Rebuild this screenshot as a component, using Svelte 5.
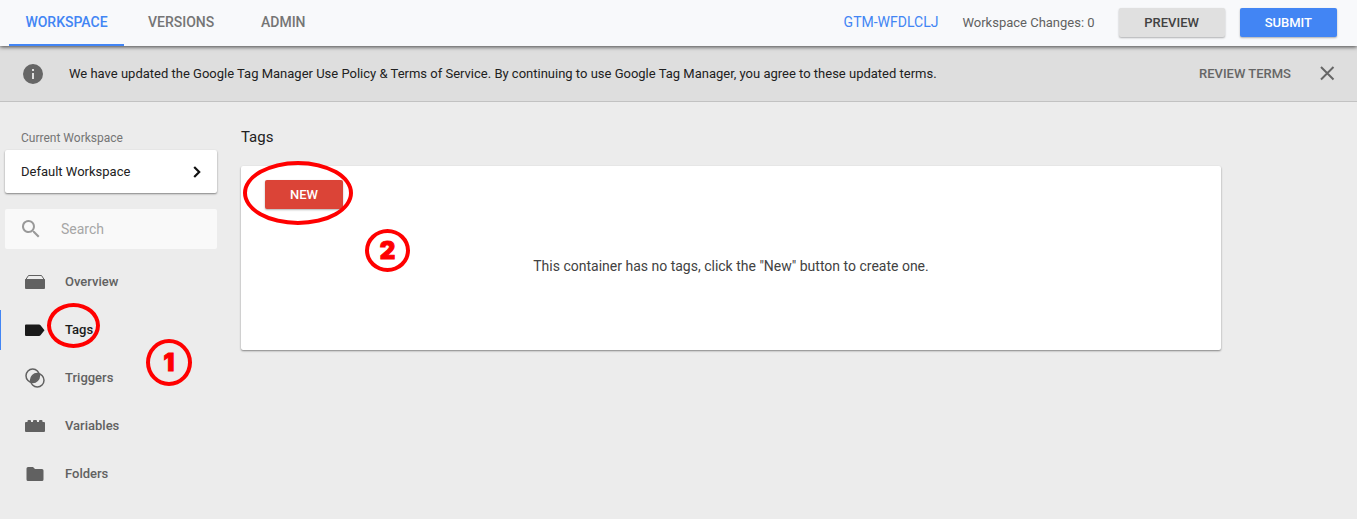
<script>
  let active = "Tags";
  let search = "";

  const tabs = ["Workspace", "Versions", "Admin"];
  const items = ["Overview", "Tags", "Triggers", "Variables", "Folders"];
</script>

<div class="page">
  <header class="topbar">
    <nav class="tabs">
      {#each tabs as tab, i}
        <a href="#{tab.toLowerCase()}" class="tab" class:selected={i === 0}>{tab}</a>
      {/each}
    </nav>
    <div class="actions">
      <a href="#container" class="container-id">GTM-WFDLCLJ</a>
      <span class="changes">Workspace Changes: 0</span>
      <button class="btn preview">PREVIEW</button>
      <button class="btn submit">SUBMIT</button>
    </div>
  </header>

  <div class="notice">
    <svg class="info" width="24" height="24" viewBox="0 0 24 24">
      <path
        fill="#666"
        d="M12 2a10 10 0 1 0 0 20 10 10 0 0 0 0-20zm1 15h-2v-6h2v6zm0-8h-2V7h2v2z"
      />
    </svg>
    <p>
      We have updated the Google Tag Manager Use Policy &amp; Terms of Service. By
      continuing to use Google Tag Manager, you agree to these updated terms.
    </p>
    <button class="review">REVIEW TERMS</button>
    <button class="close" aria-label="Close">
      <svg width="16" height="16" viewBox="0 0 16 16">
        <path d="M2 1l12.500 12.500M14.500 1L2 13.500" stroke="#666" stroke-width="2" />
      </svg>
    </button>
  </div>

  <div class="body">
    <aside class="sidebar">
      <div class="caption">Current Workspace</div>
      <button class="workspace">
        Default Workspace
        <svg width="8" height="12" viewBox="0 0 8 12">
          <path d="M1.200 1l5 5-5 5" fill="none" stroke="#111" stroke-width="2.200" />
        </svg>
      </button>
      <label class="search">
        <svg width="24" height="24" viewBox="0 0 24 24">
          <path
            fill="#999"
            d="M15.5 14h-.8l-.3-.3A6.5 6.5 0 1 0 13.700 14.400l.3.300v.8l5 5 1.500-1.500-5-5zm-6 0a4.500 4.500 0 1 1 0-9 4.500 4.500 0 0 1 0 9z"
          />
        </svg>
        <input type="text" placeholder="Search" aria-label="Search" bind:value={search} />
      </label>

      <nav class="menu">
        {#each items as item}
          <a
            href="#{item.toLowerCase()}"
            class="item"
            class:current={active === item}
            on:click|preventDefault={() => (active = item)}
          >
            <svg width="20" height="20" viewBox="0 0 20 20" fill="currentColor">
              {#if item === "Overview"}
                <path d="M0.500 8L3.500 3.500h13L19.500 8" fill="none" stroke="currentColor" />
                <rect y="7" width="20" height="10" rx="1" />
              {:else if item === "Tags"}
                <path
                  d="M1 4.500H14a2 2 0 0 1 1.500.7l4 5-4 5a2 2 0 0 1-1.500.7H1A1 1 0 0 1 0 15V5.500a1 1 0 0 1 1-1z"
                />
              {:else if item === "Triggers"}
                <circle cx="7.700" cy="7.700" r="6.700" fill="none" stroke="currentColor" stroke-width="1.500" />
                <circle cx="12.300" cy="12.300" r="6.700" fill="none" stroke="currentColor" stroke-width="1.500" />
                <path d="M14.100 5.900A6.700 6.700 0 0 1 5.900 14.100 6.700 6.700 0 0 1 14.100 5.900z" />
              {:else if item === "Variables"}
                <path
                  d="M1 6h1.500V5q0-1 1-1h1.500q1 0 1 1v1h2V5q0-1 1-1h2q1 0 1 1v1h2V5q0-1 1-1h1.500q1 0 1 1v1H19q1 0 1 1v8q0 1-1 1H1q-1 0-1-1V7q0-1 1-1z"
                />
              {:else}
                <path
                  d="M3 3h5l2 2h7a1.500 1.500 0 0 1 1.500 1.500v9A1.500 1.500 0 0 1 17 17H3a1.500 1.500 0 0 1-1.500-1.500v-11A1.500 1.500 0 0 1 3 3z"
                />
              {/if}
            </svg>
            <span class="label">{item}</span>
            {#if item === "Tags"}
              <span class="ring ring-tags"></span>
              <span class="ring step step-one">1</span>
            {/if}
          </a>
        {/each}
      </nav>
    </aside>

    <main>
      <h1>Tags</h1>
      <section class="card">
        <button class="btn new">NEW</button>
        <p>This container has no tags, click the "New" button to create one.</p>
        <span class="ring ring-new"></span>
        <span class="ring step step-two">2</span>
      </section>
    </main>
  </div>
</div>

<style>
  :global(body) {
    margin: 0;
    background: #ececec;
  }

  .page {
    min-height: 100vh;
    font-family: Roboto, sans-serif;
    font-size: 13px;
    color: #212121;
    background: #ececec;
  }

  .page * {
    box-sizing: border-box;
  }

  a {
    text-decoration: none;
  }

  button {
    font: inherit;
    border: 0;
    padding: 0;
    cursor: pointer;
  }

  .topbar {
    position: relative;
    display: flex;
    justify-content: space-between;
    height: 46px;
    padding: 0 20px 0 9px;
    background: #f8f9fb;
    box-shadow: 0 1px 4px rgba(0, 0, 0, 0.7);
  }

  .tabs {
    display: flex;
    gap: 8px;
  }

  .tab {
    min-width: 90px;
    padding: 0 16px;
    border-bottom: 2px solid transparent;
    font-size: 14px;
    font-weight: 500;
    line-height: 44px;
    text-align: center;
    text-transform: uppercase;
    color: #757575;
  }

  .tab.selected {
    min-width: 115px;
    color: #4285f4;
    border-color: #4285f4;
  }

  .actions {
    display: flex;
    align-items: center;
    padding-bottom: 2px;
  }

  .container-id {
    margin-right: 24px;
    font-size: 14px;
    color: #4285f4;
  }

  .changes {
    margin-right: 24px;
    color: #616161;
  }

  .btn {
    height: 29px;
    padding: 0 25px;
    border-radius: 2px;
    font-weight: 500;
    box-shadow: 0 1px 2px rgba(0, 0, 0, 0.3);
  }

  .preview {
    min-width: 106px;
    margin-right: 15px;
    color: #424242;
    background: #e0e0e0;
  }

  .submit {
    color: #fff;
    background: #4285f4;
  }

  .notice {
    display: flex;
    align-items: center;
    height: 56px;
    padding: 0 22px 0 21px;
    background: #dedede;
    border-bottom: 1px solid #c2c2c2;
  }

  .notice p {
    flex: 1;
    margin: 0 0 0 24px;
  }

  .review {
    margin-right: 28px;
    font-weight: 500;
    color: #666;
    background: none;
  }

  .close {
    display: flex;
    background: none;
  }

  .body {
    display: flex;
    gap: 24px;
  }

  .sidebar {
    flex: none;
    width: 217px;
    padding-top: 28px;
  }

  .caption {
    padding-left: 21px;
    font-size: 12px;
    line-height: 16px;
    color: #757575;
  }

  .workspace {
    display: flex;
    align-items: center;
    justify-content: space-between;
    width: 212px;
    height: 43px;
    margin: 4px 0 0 5px;
    padding: 0 16px;
    color: #212121;
    background: #fff;
    border-radius: 2px;
    box-shadow: 0 1px 2px rgba(0, 0, 0, 0.45);
  }

  .search {
    display: flex;
    align-items: center;
    gap: 18px;
    height: 40px;
    margin: 16px 0 0 5px;
    padding: 0 14px;
    background: #f9f9f9;
    border-radius: 2px;
  }

  .search svg {
    flex: none;
  }

  input {
    width: 100%;
    min-width: 0;
    padding: 0;
    border: 0;
    outline: 0;
    font: inherit;
    font-size: 14px;
    color: #212121;
    background: none;
  }

  input::placeholder {
    color: #a6a6a6;
    opacity: 1;
  }

  .menu {
    display: flex;
    flex-direction: column;
    gap: 8px;
    margin-top: 13px;
  }

  .item {
    position: relative;
    display: flex;
    align-items: center;
    gap: 20px;
    height: 40px;
    padding-left: 25px;
    font-weight: 500;
    color: #616161;
  }

  .item.current {
    color: #1a1a1a;
    box-shadow: inset 1px 0 #4285f4;
  }

  .label {
    padding-bottom: 2px;
  }

  main {
    flex: 1;
    max-width: 980px;
    padding-top: 25px;
  }

  h1 {
    margin: 0;
    font-size: 15px;
    font-weight: 400;
    line-height: 20px;
  }

  .card {
    position: relative;
    min-height: 184px;
    margin-top: 19px;
    padding: 14px 24px;
    background: #fff;
    border-radius: 2px;
    box-shadow: 0 1px 2px rgba(0, 0, 0, 0.45);
  }

  .new {
    display: block;
    color: #fff;
    background: #db4437;
  }

  .card p {
    margin: 47px 0 0;
    font-size: 14px;
    line-height: 20px;
    text-align: center;
    color: #424242;
  }

  /* red markers laid over the page */
  .ring {
    position: absolute;
    border: 4px solid #f00;
    border-radius: 50%;
    pointer-events: none;
  }

  .ring-tags {
    top: -7px;
    left: 47px;
    width: 53px;
    height: 45px;
  }

  .ring-new {
    top: -5px;
    left: 2px;
    width: 110px;
    height: 64px;
  }

  .step {
    display: flex;
    align-items: center;
    justify-content: center;
    font-family: Inter, sans-serif;
    font-size: 24px;
    font-weight: 900;
    color: #f00;
    -webkit-text-stroke: 1px #f00;
  }

  .step-one {
    top: 29px;
    left: 146px;
    width: 46px;
    height: 47px;
  }

  .step-two {
    top: 63px;
    left: 124px;
    width: 45px;
    height: 43px;
  }
</style>
